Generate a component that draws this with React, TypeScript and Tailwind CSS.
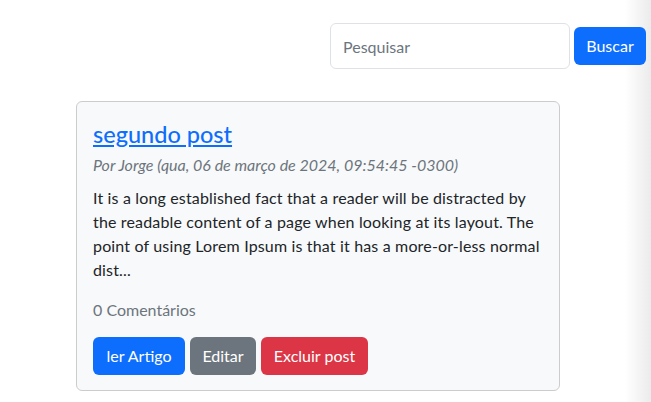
const font = { fontFamily: '"Lato", "Noto Sans", sans-serif' };

export default function App() {
  return (
    <div className="relative w-[651px] h-[402px] bg-white overflow-hidden text-[#212529]" style={font}>
      <div className="absolute top-0 right-0 h-full w-[26px] bg-gradient-to-r from-white/0 to-[#ebebeb]" />

      <div className="relative flex justify-end gap-1 pt-[23px] pr-[5px]">
        <input
          placeholder="Pesquisar"
          className="w-[240px] h-[46px] rounded-[6px] border border-[#dee2e6] bg-white px-3 text-[16px] placeholder:text-[#6c757d] outline-none"
          style={font}
        />
        <button className="mt-1 h-[38px] w-[72px] rounded-[6px] bg-[#0d6efd] text-white text-[16px]">Buscar</button>
      </div>

      <div className="relative ml-[76px] mt-[32px] w-[484px] rounded-[6px] border border-[#ccc] bg-[#f8f9fa] px-4 pt-[17px] pb-[15px] tracking-[0.01em]">
        <a href="#" className="text-[23.5px] font-medium text-[#0d6efd] underline leading-[30px] tracking-normal">
          segundo post
        </a>
        <p className="mt-[4px] text-[16px] italic text-[#6c757d] leading-[24px] tracking-normal">
          Por Jorge (qua, 06 de março de 2024, 09:54:45 -0300)
        </p>
        <p className="mt-[9px] text-[16px] leading-[24px]">
          It is a long established fact that a reader will be distracted by the readable content of a page when looking
          at its layout. The point of using Lorem Ipsum is that it has a more-or-less normal dist...
        </p>
        <p className="mt-[16px] text-[16px] text-[#6c757d] leading-[24px] tracking-normal">0 Comentários</p>
        <div className="mt-[15px] flex gap-[5px] tracking-normal">
          <button className="h-[38px] w-[92px] rounded-[6px] bg-[#0d6efd] text-white text-[16px]">ler Artigo</button>
          <button className="h-[38px] w-[66px] rounded-[6px] bg-[#6c757d] text-white text-[16px]">Editar</button>
          <button className="h-[38px] w-[107px] rounded-[6px] bg-[#dc3545] text-white text-[16px]">Excluir post</button>
        </div>
      </div>
    </div>
  );
}
